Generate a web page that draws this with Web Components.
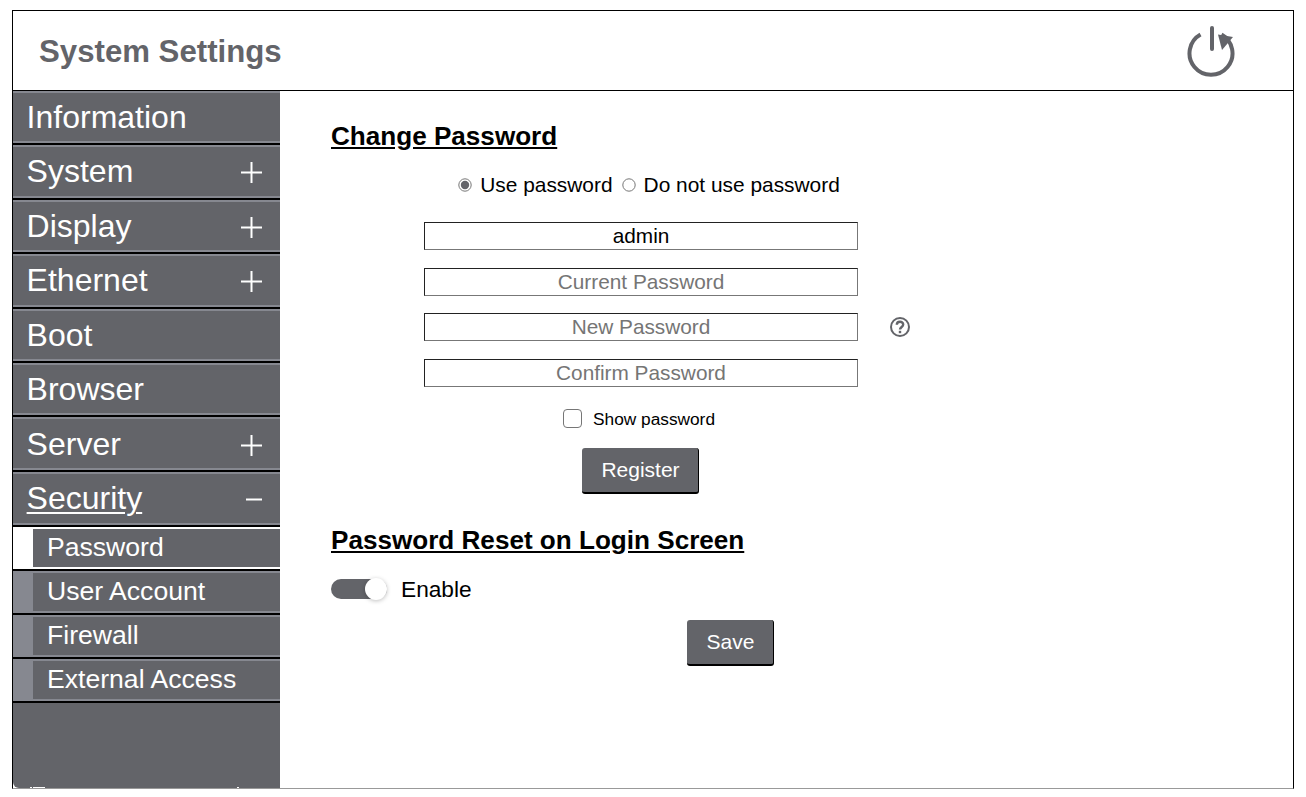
<!DOCTYPE html>
<html lang="en">
<head>
<meta charset="utf-8">
<title>System Settings</title>
<style>
  html, body { height: 100%; }
  body {
    margin: 0;
    background: #fff;
    font-family: "Liberation Sans", Arial, sans-serif;
    overflow: hidden;
  }
</style>
</head>
<body>
<settings-app>
  <side-menu slot="menu">
    <menu-item>Information</menu-item>
    <menu-item sign="plus" style="padding-bottom:2px">System</menu-item>
    <menu-item sign="plus">Display</menu-item>
    <menu-item sign="plus">Ethernet</menu-item>
    <menu-item>Boot</menu-item>
    <menu-item>Browser</menu-item>
    <menu-item sign="plus">Server</menu-item>
    <menu-item sign="minus" open>Security</menu-item>
    <sub-item active>Password</sub-item>
    <sub-item>User Account</sub-item>
    <sub-item>Firewall</sub-item>
    <sub-item>External Access</sub-item>
  </side-menu>
  <password-page slot="page"></password-page>
</settings-app>

<script>
// shared colour of the bars, buttons and icons
const GREY = "#636469";
const GREY_LIGHT = "#868890";

// expand / collapse signs of the menu rows
const SIGNS = {
  plus: `<svg width="21" height="21" viewBox="0 0 21 21"><path d="M0 10.5H21M10.5 0V21" stroke="#fff" stroke-width="2"/></svg>`,
  minus: `<svg width="21" height="21" viewBox="0 0 21 21"><path d="M5 10.5H21" stroke="#fff" stroke-width="2"/></svg>`
};

// outer frame: header on top, menu and page below
class SettingsApp extends HTMLElement {
  constructor() {
    super();
    this.attachShadow({ mode: "open" });
    this.shadowRoot.innerHTML = `
<style>
:host { display: block; height: 100vh; box-sizing: border-box; padding: 10px 12px 8px; }
.frame {
  position: relative;
  height: 100%;
  box-sizing: border-box;
  display: grid;
  grid-template-rows: 80px 1fr;
  border: 1px solid #000;
  border-bottom: 1px solid #999;
  overflow: hidden;
}
.frame::after {
  content: "";
  position: absolute;
  left: 850px; right: 0; bottom: -1px;
  height: 1px;
  background: repeating-linear-gradient(90deg, #56626c 0 8px, #fff 8px 12px);
}
header {
  display: flex;
  align-items: center;
  justify-content: space-between;
  padding: 0 57px 0 26px;
  border-bottom: 1px solid #000;
  color: ${GREY};
  font-size: 31.2px;
  font-weight: bold;
}
header span { margin-top: 2px; }
svg { display: block; margin-top: 1px; }
.body { display: grid; grid-template-columns: 267px 1fr; min-height: 0; }
</style>
<div class="frame">
  <header>
    <span>System Settings</span>
    <svg width="50" height="54" viewBox="0 0 50 54" fill="none">
      <path d="M14.5 10.5 A21.5 21.5 0 1 0 35.5 10.5" stroke="${GREY}" stroke-width="4"/>
      <path d="M26 4 V25" stroke="${GREY}" stroke-width="4" stroke-linecap="round"/>
      <path d="M32 10.5 L47 13 L36 26 Z" fill="${GREY}"/>
    </svg>
  </header>
  <div class="body">
    <slot name="menu"></slot>
    <slot name="page"></slot>
  </div>
</div>`;
  }
}

class SideMenu extends HTMLElement {
  constructor() {
    super();
    this.attachShadow({ mode: "open" });
    this.shadowRoot.innerHTML = `
<style>
:host {
  display: block;
  position: relative;
  height: 100%;
  box-sizing: border-box;
  background: ${GREY};
  border-bottom-left-radius: 6px;
  overflow: hidden;
}
/* tops of the footer line that the frame cuts off */
i { position: absolute; bottom: 0; height: 1px; background: #fff; }
</style>
<slot></slot>
<i style="left:17px;width:2px"></i><i style="left:20px;width:12px"></i><i style="left:224px;width:2px"></i>`;
  }
}

// top level row of the menu
class MenuItem extends HTMLElement {
  constructor() {
    super();
    this.attachShadow({ mode: "open" });
    const sign = SIGNS[this.getAttribute("sign")] || "";
    this.shadowRoot.innerHTML = `
<style>
:host {
  display: flex;
  align-items: center;
  justify-content: space-between;
  box-sizing: border-box;
  height: 54.4px;
  padding: 0 18px 1px 13.6px;
  background: ${GREY};
  border-top: 2px solid ${GREY_LIGHT};
  border-bottom: 2px solid #000;
  box-shadow: inset 0 -2px 0 ${GREY_LIGHT};
  color: #fff;
  font-size: 32px;
}
:host([open]) { height: 55.4px; }
:host([open]) .label { text-decoration: underline; text-decoration-thickness: 2px; text-underline-offset: 3px; }
svg { display: block; margin-top: 2px; }
</style>
<span class="label"><slot></slot></span>
${sign}`;
  }
}

// second level row, with the strip on its left
class SubItem extends HTMLElement {
  constructor() {
    super();
    this.attachShadow({ mode: "open" });
    this.shadowRoot.innerHTML = `
<style>
:host {
  display: block;
  box-sizing: border-box;
  height: 44px;
  padding: 2px 0 2px 20px;
  background: ${GREY_LIGHT};
  border-bottom: 2px solid #000;
  color: #fff;
  font-size: 26.6px;
}
:host([active]) { background: #fff; }
div {
  box-sizing: border-box;
  height: 100%;
  padding: 0 0 2px 14px;
  background: ${GREY};
  display: flex;
  align-items: center;
}
</style>
<div><slot></slot></div>`;
  }
}

class TextField extends HTMLElement {
  constructor() {
    super();
    this.attachShadow({ mode: "open" });
    this.shadowRoot.innerHTML = `
<style>
:host {
  display: block;
  box-sizing: border-box;
  width: 434px;
  height: 28px;
  line-height: 26px;
  text-align: center;
  font-size: 20.8px;
  color: #000;
  border: 1px solid #777;
  border-top-color: #222;
  border-left-color: #222;
}
:host([placeholder]) { color: #757575; }
</style>
<slot></slot>`;
  }
}

class PushButton extends HTMLElement {
  constructor() {
    super();
    this.attachShadow({ mode: "open" });
    this.shadowRoot.innerHTML = `
<style>
:host {
  display: inline-block;
  box-sizing: border-box;
  height: 46px;
  line-height: 43px;
  padding-left: 1px;
  background: ${GREY};
  color: #fff;
  font-size: 21px;
  text-align: center;
  border-radius: 3px;
  border-bottom: 2px solid #000;
  border-right: 1px solid #000;
}
</style>
<slot></slot>`;
  }
}

class ToggleSwitch extends HTMLElement {
  constructor() {
    super();
    this.attachShadow({ mode: "open" });
    this.shadowRoot.innerHTML = `
<style>
:host { display: flex; align-items: center; gap: 14px; font-size: 22.7px; color: #000; }
.track { position: relative; width: 56px; height: 20px; border-radius: 10px; background: ${GREY}; }
.knob {
  position: absolute; right: 0; top: -1px;
  width: 22px; height: 22px; border-radius: 50%;
  background: #fff;
  box-shadow: 0 1px 4px rgba(0,0,0,.25);
}
</style>
<span class="track"><span class="knob"></span></span>
<slot></slot>`;
  }
}

class RadioOption extends HTMLElement {
  constructor() {
    super();
    this.attachShadow({ mode: "open" });
    this.shadowRoot.innerHTML = `
<style>
:host { display: inline-flex; align-items: center; gap: 8px; }
svg { display: block; }
</style>
<svg width="14" height="14" viewBox="0 0 14 14">
  <circle cx="7" cy="7" r="6.2" fill="#fff" stroke="#767676"/>
  ${this.hasAttribute("checked") ? `<circle cx="7" cy="7" r="4.2" fill="${GREY}"/>` : ""}
</svg>
<slot></slot>`;
  }
}

// the whole right hand page
class PasswordPage extends HTMLElement {
  constructor() {
    super();
    this.attachShadow({ mode: "open" });
    this.shadowRoot.innerHTML = `
<style>
:host { display: block; padding: 30px 0 0 51px; color: #000; font-size: 20.8px; }
h2 { margin: 0; font-size: 26.1px; line-height: 30px; text-decoration: underline; }
.form { width: 620px; display: flex; flex-direction: column; align-items: center; }
.radios { display: flex; gap: 9px; margin: 22px 0 0 16px; font-size: 20.9px; line-height: 24px; }
.fields { display: flex; flex-direction: column; gap: 17.6px; margin-top: 25px; }
.row { display: flex; align-items: center; }
.help { flex: none; margin: 0 -52px 0 32px; display: block; }
.show { display: flex; align-items: center; gap: 11px; margin: 22px 4px 0 0; font-size: 17.3px; line-height: 20px; }
.box { width: 19px; height: 19px; box-sizing: border-box; border: 1.5px solid #767676; border-radius: 4px; background: #fff; }
.register { width: 117px; margin: 19px 1px 0 0; }
.reset { margin-top: 31px; }
toggle-switch { margin-top: 21px; }
.save { width: 799px; display: flex; justify-content: center; margin-top: 17px; }
.save push-button { width: 87px; }
</style>
<h2>Change Password</h2>
<div class="form">
  <div class="radios">
    <radio-option checked>Use password</radio-option>
    <radio-option>Do not use password</radio-option>
  </div>
  <div class="fields">
    <text-field>admin</text-field>
    <text-field placeholder>Current Password</text-field>
    <div class="row">
      <text-field placeholder>New Password</text-field>
      <svg class="help" width="20" height="20" viewBox="0 0 20 20" fill="none">
        <circle cx="10" cy="10" r="9" stroke="${GREY}" stroke-width="2"/>
        <path d="M6.8 7.8 C6.8 3.8 13.2 3.8 13.2 7.6 C13.2 10 10 10 10 12.6" stroke="${GREY}" stroke-width="2.4"/>
        <rect x="8.8" y="13.8" width="2.4" height="2.4" fill="${GREY}"/>
      </svg>
    </div>
    <text-field placeholder>Confirm Password</text-field>
  </div>
  <div class="show"><span class="box"></span><span>Show password</span></div>
  <push-button class="register">Register</push-button>
</div>
<h2 class="reset">Password Reset on Login Screen</h2>
<toggle-switch>Enable</toggle-switch>
<div class="save"><push-button>Save</push-button></div>`;
  }
}

customElements.define("settings-app", SettingsApp);
customElements.define("side-menu", SideMenu);
customElements.define("menu-item", MenuItem);
customElements.define("sub-item", SubItem);
customElements.define("text-field", TextField);
customElements.define("push-button", PushButton);
customElements.define("toggle-switch", ToggleSwitch);
customElements.define("radio-option", RadioOption);
customElements.define("password-page", PasswordPage);
</script>
</body>
</html>
